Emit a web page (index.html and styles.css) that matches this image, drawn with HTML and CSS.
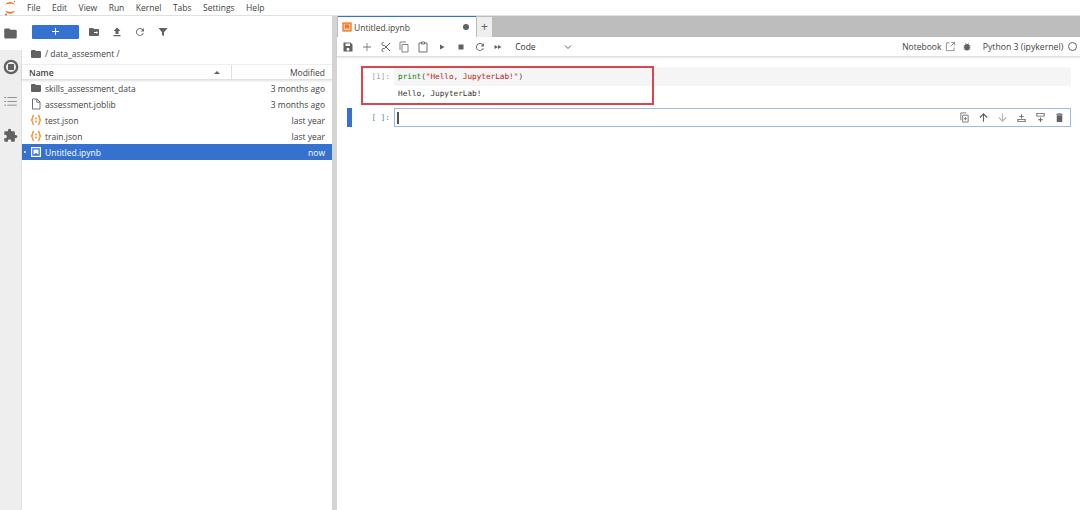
FILE: index.html
```html
<!DOCTYPE html>
<html lang="en">
<head>
<meta charset="UTF-8" />
<title>JupyterLab</title>
<link rel="stylesheet" href="styles.css">
</head>
<body>

<div class="menubar">
  <svg class="logo" width="14" height="16" viewBox="0 0 14 16">
    <path d="M2 5C4 1 10 1 12 5C10 3.300 4 3.300 2 5Z" fill="#f37726"/>
    <path d="M2 10.500C4 14.800 10 14.800 12 10.500C10 12.200 4 12.200 2 10.500Z" fill="#f37726"/>
    <circle cx="11.500" cy="1.500" r="0.700" fill="#767677"/>
    <circle cx="3" cy="14.500" r="0.900" fill="#767677"/>
  </svg>
  <span>File</span><span>Edit</span><span>View</span><span>Run</span><span>Kernel</span><span>Tabs</span><span>Settings</span><span>Help</span>
</div>

<div class="workspace">
  <div class="rail">
    <div class="rail-tab active">
      <svg width="15" height="15" viewBox="0 0 24 24"><path class="ic" d="M10 4H4a2 2 0 0 0-2 2v12a2 2 0 0 0 2 2h16a2 2 0 0 0 2-2V8a2 2 0 0 0-2-2h-8z"/></svg>
    </div>
    <div class="rail-tab">
      <svg width="16" height="16" viewBox="0 0 24 24"><path class="ic" fill-rule="evenodd" d="M12 1a11 11 0 1 0 0 22a11 11 0 0 0 0-22zm0 3.500a7.500 7.500 0 1 1 0 15a7.500 7.500 0 0 1 0-15z"/><rect class="ic" x="7.500" y="7.500" width="9" height="9"/></svg>
    </div>
    <div class="rail-tab">
      <svg width="15" height="15" viewBox="0 0 24 24"><path fill="#757575" d="M2 5h3v1.500H2zM7 5h15v1.500H7zM2 11h3v1.500H2zM7 11h15v1.500H7zM2 17h3v1.500H2zM7 17h15v1.500H7z"/></svg>
    </div>
    <div class="rail-tab">
      <svg width="15" height="15" viewBox="0 0 24 24"><path class="ic" d="M20.500 11H19V7a2 2 0 0 0-2-2h-4V3.500a2.500 2.500 0 0 0-5 0V5H4a2 2 0 0 0-2 2v3.800h1.500a2.700 2.700 0 0 1 0 5.400H2V20a2 2 0 0 0 2 2h3.800v-1.500a2.700 2.700 0 0 1 5.400 0V22H17a2 2 0 0 0 2-2v-4h1.500a2.500 2.500 0 0 0 0-5z"/></svg>
    </div>
  </div>

  <div class="sidebar">
    <div class="fb-toolbar">
      <button class="new-btn">
        <svg width="7" height="7" viewBox="0 0 8 8"><path d="M3.400 0h1.200v3.400H8v1.200H4.600V8H3.400V4.600H0V3.400h3.400z" fill="#fff"/></svg>
      </button>
      <svg width="12" height="12" viewBox="0 0 24 24"><path class="ic" d="M10 4H4a2 2 0 0 0-2 2v12a2 2 0 0 0 2 2h16a2 2 0 0 0 2-2V8a2 2 0 0 0-2-2h-8z"/><path d="M12 12h5v-2l3 3-3 3v-2h-5z" fill="#fff"/></svg>
      <svg width="12" height="12" viewBox="0 0 24 24"><path class="ic" d="M9 16h6v-6h4l-7-7-7 7h4zM5 18h14v2.500H5z"/></svg>
      <svg width="12" height="12" viewBox="0 0 24 24"><path fill="#757575" d="M17.650 6.350A8 8 0 1 0 19.700 14h-2.100a6 6 0 1 1-1.400-6.200L13 11h7V4z"/></svg>
      <svg width="12" height="12" viewBox="0 0 24 24"><path class="ic" d="M3 4h18l-7 8.500V20l-4-2v-5.500z"/></svg>
    </div>
    <div class="crumbs">
      <svg width="12" height="12" viewBox="0 0 24 24"><path class="ic" d="M10 4H4a2 2 0 0 0-2 2v12a2 2 0 0 0 2 2h16a2 2 0 0 0 2-2V8a2 2 0 0 0-2-2h-8z"/></svg>
      <span>/ data_assesment /</span>
    </div>
    <div class="list-head">
      <div class="col-name">Name<i class="sort"></i></div>
      <div class="col-mod">Modified</div>
    </div>
    <div class="row">
      <svg width="12" height="12" viewBox="0 0 24 24"><path class="ic" d="M10 4H4a2 2 0 0 0-2 2v12a2 2 0 0 0 2 2h16a2 2 0 0 0 2-2V8a2 2 0 0 0-2-2h-8z"/></svg>
      <span class="fname">skills_assessment_data</span><span class="fdate">3 months ago</span>
    </div>
    <div class="row">
      <svg width="12" height="12" viewBox="0 0 24 24"><path d="M5 2h9l6 6v14H5zM13.500 2.500V8.500H19.500" fill="none" stroke="#616161" stroke-width="1.800"/></svg>
      <span class="fname">assessment.joblib</span><span class="fdate">3 months ago</span>
    </div>
    <div class="row">
      <svg width="12" height="12" viewBox="0 0 24 24"><path class="json" d="M8 3H7C4.500 3 6 10 3 12C6 14 4.500 21 7 21H8M16 3H17C19.500 3 18 10 21 12C18 14 19.500 21 17 21H16"/><circle class="json-dot" cx="12" cy="9" r="2"/><circle class="json-dot" cx="12" cy="15" r="2"/></svg>
      <span class="fname">test.json</span><span class="fdate">last year</span>
    </div>
    <div class="row">
      <svg width="12" height="12" viewBox="0 0 24 24"><path class="json" d="M8 3H7C4.500 3 6 10 3 12C6 14 4.500 21 7 21H8M16 3H17C19.500 3 18 10 21 12C18 14 19.500 21 17 21H16"/><circle class="json-dot" cx="12" cy="9" r="2"/><circle class="json-dot" cx="12" cy="15" r="2"/></svg>
      <span class="fname">train.json</span><span class="fdate">last year</span>
    </div>
    <div class="row selected">
      <i class="dot"></i>
      <svg width="12" height="12" viewBox="0 0 24 24"><path fill="#fff" fill-rule="evenodd" d="M2 2h20v20H2zM4.500 4.500v15h15v-15z"/><path fill="#fff" d="M7 7h10v10l-5-3-5 3z"/></svg>
      <span class="fname">Untitled.ipynb</span><span class="fdate">now</span>
    </div>
  </div>

  <div class="main">
    <div class="tabbar">
      <div class="tab">
        <svg width="10" height="10" viewBox="0 0 24 24"><rect x="1" y="1" width="22" height="22" fill="#f9c9a4"/><path fill="#f37726" fill-rule="evenodd" d="M1 1h22v22H1zM4 4v16h16V4z"/><path fill="#f37726" d="M7 6h10v11l-5-3-5 3z"/></svg>
        <span>Untitled.ipynb</span>
        <i class="dirty"></i>
      </div>
      <div class="tab-add">+</div>
    </div>
    <div class="nb-toolbar">
      <svg width="12" height="12" viewBox="0 0 24 24"><path class="ic" fill-rule="evenodd" d="M3 3h14l4 4v14H3zM7 5v5h9V5zM12 13.500a3 3 0 1 0 0 6a3 3 0 0 0 0-6z"/></svg>
      <svg width="12" height="12" viewBox="0 0 24 24"><path fill="#757575" d="M11.200 4h1.600v7.200H20v1.600h-7.200V20h-1.600v-7.200H4v-1.600h7.200z"/></svg>
      <svg width="12" height="12" viewBox="0 0 24 24"><path d="M7 3a3 3 0 1 0 1.500 5.600L20 20M7 21a3 3 0 1 1 1.500-5.600L20 4" fill="none" stroke="#616161" stroke-width="2"/></svg>
      <svg width="12" height="12" viewBox="0 0 24 24"><path d="M8 7h12v15H8zM16 2H4v16" fill="none" stroke="#757575" stroke-width="1.800"/></svg>
      <svg width="12" height="12" viewBox="0 0 24 24"><path d="M9 4H4v18h16V4h-5M9 2h6v4H9z" fill="none" stroke="#616161" stroke-width="1.800"/></svg>
      <svg width="12" height="12" viewBox="0 0 24 24"><path class="ic" d="M8 7l9 5-9 5z"/></svg>
      <svg width="12" height="12" viewBox="0 0 24 24"><rect class="ic" x="7" y="7" width="10" height="10"/></svg>
      <svg width="12" height="12" viewBox="0 0 24 24"><path fill="#757575" d="M17.650 6.350A8 8 0 1 0 19.700 14h-2.100a6 6 0 1 1-1.400-6.200L13 11h7V4z"/></svg>
      <svg width="12" height="12" viewBox="0 0 24 24"><path class="ic" d="M5 8l7 4-7 4zM12 8l7 4-7 4z"/></svg>
      <div class="cell-type">Code
        <svg width="10" height="10" viewBox="0 0 10 10"><path d="M2 3.500l3 3 3-3" fill="none" stroke="#616161" stroke-width="1"/></svg>
      </div>
      <div class="spacer"></div>
      <span class="nb-label">Notebook</span>
      <svg width="11" height="11" viewBox="0 0 24 24"><path d="M10 4H3v17h17v-7M14 3h7v7M21 3l-9 9" fill="none" stroke="#8a8a8a" stroke-width="2"/></svg>
      <svg class="bug" width="10" height="10" viewBox="0 0 24 24"><path class="ic" d="M20 8h-3a6 6 0 0 0-1.800-2L17 4.400 15.600 3l-2.200 2.200a6 6 0 0 0-2.800 0L8.400 3 7 4.400 8.800 6A6 6 0 0 0 7 8H4v2h2v2H4v2h2v2H4v2h3a6 6 0 0 0 10 0h3v-2h-2v-2h2v-2h-2v-2h2z"/></svg>
      <span class="kernel">Python 3 (ipykernel)</span>
      <i class="kernel-state"></i>
    </div>
    <div class="notebook">
      <div class="cell first">
        <div class="marker"></div>
        <div class="prompt">[1]:</div>
        <div class="cell-body">
          <div class="input"><span class="py-fn">print</span>(<span class="py-str">"Hello, JupyterLab!"</span>)</div>
          <div class="output">Hello, JupyterLab!</div>
        </div>
        <div class="highlight"></div>
      </div>
      <div class="cell">
        <div class="marker on"></div>
        <div class="prompt active">[ ]:</div>
        <div class="editor">
          <i class="caret"></i>
          <div class="cell-tools">
            <svg width="11" height="11" viewBox="0 0 24 24"><path d="M8 7h12v15H8zM16 2H4v16" fill="none" stroke="#757575" stroke-width="2"/><path d="M14 11v7M10.500 14.500h7" stroke="#757575" stroke-width="2"/></svg>
            <svg width="11" height="11" viewBox="0 0 24 24"><path d="M12 21V4M4 12l8-8 8 8" fill="none" stroke="#616161" stroke-width="2.400"/></svg>
            <svg width="11" height="11" viewBox="0 0 24 24"><path d="M12 3v17M4 12l8 8 8-8" fill="none" stroke="#b5b5b5" stroke-width="2.400"/></svg>
            <svg width="11" height="11" viewBox="0 0 24 24"><path class="ic" d="M3 15h18v7H3zM5 17v3h14v-3zM11 9V5h2v4h4v2h-4v3h-2v-3H7V9z"/></svg>
            <svg width="11" height="11" viewBox="0 0 24 24"><path class="ic" d="M3 2h18v8H3zM5 4v4h14V4zM11 12h2v4h4v2h-4v4h-2v-4H7v-2h4z"/></svg>
            <svg width="11" height="11" viewBox="0 0 24 24"><path class="ic" d="M6 7h12v15H6zM5 4h4l1-1.500h4L15 4h4v2H5z"/></svg>
          </div>
        </div>
      </div>
    </div>
  </div>
</div>

</body>
</html>
```

FILE: styles.css
```css
* {
  box-sizing: border-box;
}

html, body {
  height: 100%;
  margin: 0;
}

body {
  background: #fff;
  font-family: "Open Sans", "Liberation Sans", Arial, sans-serif;
  font-size: 8.5px;
  color: #424242;
  overflow: hidden;
  display: flex;
  flex-direction: column;
}

.ic {
  fill: #616161;
}

.json {
  fill: none;
  stroke: #f0973c;
  stroke-width: 3;
}

.json-dot {
  fill: #f0973c;
}

.menubar {
  height: 16px;
  display: flex;
  align-items: center;
  gap: 11.500px;
  padding-left: 3px;
  border-bottom: 1px solid #e0e0e0;
  line-height: 15px;
}

.logo {
  margin-right: -1.500px;
}

.workspace {
  flex: 1;
  display: flex;
  min-height: 0;
}

.rail {
  width: 22px;
  background: #eee;
  border-right: 1px solid #e0e0e0;
  flex: none;
}

.rail-tab {
  height: 34px;
  display: flex;
  align-items: center;
  justify-content: center;
}
.rail-tab.active {
  background: #fff;
  margin-right: -1px;
  padding-right: 1px;
}

.sidebar {
  width: 310px;
  flex: none;
}

.fb-toolbar {
  height: 31px;
  display: flex;
  align-items: center;
  gap: 11px;
  padding: 0 0 0 10px;
}

.new-btn {
  width: 47px;
  height: 14px;
  padding: 0;
  margin-right: -2px;
  border: 0;
  border-radius: 1px;
  background: #3572cf;
  display: flex;
  align-items: center;
  justify-content: center;
}

.crumbs {
  height: 13px;
  margin-bottom: 4px;
  display: flex;
  align-items: center;
  gap: 3px;
  padding-left: 8px;
}

.list-head {
  height: 16px;
  display: flex;
  align-items: stretch;
  border-bottom: 1px solid #e0e0e0;
  box-shadow: 0 1px 2px rgba(0,0,0,0.12);
  border-top: 1px solid #eee;
  line-height: 15px;
}

.col-name {
  width: 210px;
  padding-left: 7px;
  font-weight: 600;
  border-right: 1px solid #e0e0e0;
  position: relative;
}

.sort {
  position: absolute;
  right: 11px;
  top: 6px;
  border-left: 3px solid transparent;
  border-right: 3px solid transparent;
  border-bottom: 3px solid #616161;
}

.col-mod {
  flex: 1;
  text-align: right;
  padding-right: 7px;
}

.row {
  height: 16px;
  display: flex;
  align-items: center;
  padding: 0 7px 0 8px;
  position: relative;
}

.fname {
  margin-left: 3px;
  flex: 1;
}

.row.selected {
  background: #3572cf;
  color: #fff;
}

.dot {
  position: absolute;
  left: 2px;
  top: 7px;
  width: 2px;
  height: 2px;
  border-radius: 50%;
  background: #fff;
}

.main {
  flex: 1;
  min-width: 0;
  border-left: 5px solid #d4d4d4;
  display: flex;
  flex-direction: column;
}

.tabbar {
  height: 21px;
  flex: none;
  background: #bdbdbd;
  display: flex;
  align-items: flex-end;
  padding-left: 1px;
  gap: 1px;
}

.tab {
  width: 138px;
  height: 21px;
  background: #fff;
  border-top: 1px solid #3572cf;
  display: flex;
  align-items: center;
  gap: 2px;
  padding: 0 6px 0 4px;
}
.tab span {
  flex: 1;
}

.dirty {
  width: 6px;
  height: 6px;
  border-radius: 50%;
  background: #616161;
  margin-right: 1px;
}

.tab-add {
  width: 15px;
  height: 20px;
  background: #eee;
  color: #616161;
  font-size: 12px;
  line-height: 20px;
  text-align: center;
}

.nb-toolbar {
  height: 20px;
  flex: none;
  display: flex;
  align-items: center;
  gap: 6.800px;
  padding: 0 3px 0 5px;
  border-bottom: 1px solid #e0e0e0;
  box-shadow: 0 1px 2px rgba(0,0,0,0.1);
}

.cell-type {
  width: 58px;
  margin-left: 4px;
  display: flex;
  justify-content: space-between;
  align-items: center;
  color: #333;
}

.spacer {
  flex: 1;
}

.nb-label {
  margin-right: -3px;
}

.bug {
  margin: 0 4px 0 -1px;
}

.kernel {
  margin-right: -2px;
  font-size: 8.700px;
}

.kernel-state {
  width: 9px;
  height: 9px;
  border: 1px solid #616161;
  border-radius: 50%;
}

.notebook {
  flex: 1;
  padding-top: 10px;
  display: flex;
  flex-direction: column;
  gap: 5px;
}

.cell {
  display: flex;
  position: relative;
  padding-right: 9px;
}

.marker {
  width: 5px;
  margin-left: 10px;
  flex: none;
}
.marker.on {
  background: #3572cf;
}

.prompt {
  width: 42px;
  flex: none;
  padding-right: 4px;
  text-align: right;
  font-family: "DejaVu Sans Mono", "Liberation Mono", monospace;
  font-size: 7.700px;
  line-height: 19px;
  color: #a3a3a3;
}
.prompt.active {
  color: #5b84ad;
}

.cell-body {
  flex: 1;
  font-family: "DejaVu Sans Mono", "Liberation Mono", monospace;
  font-size: 7.700px;
}

.input {
  height: 19px;
  line-height: 19px;
  padding-left: 4px;
  background: #f5f5f5;
  border-radius: 2px;
  color: #424242;
}

.output {
  height: 17px;
  line-height: 16px;
  padding-left: 4px;
  color: #333;
}

.py-fn {
  color: #008000;
}

.py-str {
  color: #ba2121;
}

.highlight {
  position: absolute;
  left: 24px;
  top: -1px;
  width: 293px;
  height: 39px;
  border: 2px solid #d9464f;
}

.editor {
  flex: 1;
  height: 19px;
  border: 1px solid #98bfe0;
  position: relative;
  display: flex;
  align-items: center;
  padding-left: 2px;
}

.caret {
  width: 2px;
  height: 12px;
  background: #555;
}

.cell-tools {
  position: absolute;
  right: 5px;
  top: 3px;
  display: flex;
  gap: 8px;
}
```
